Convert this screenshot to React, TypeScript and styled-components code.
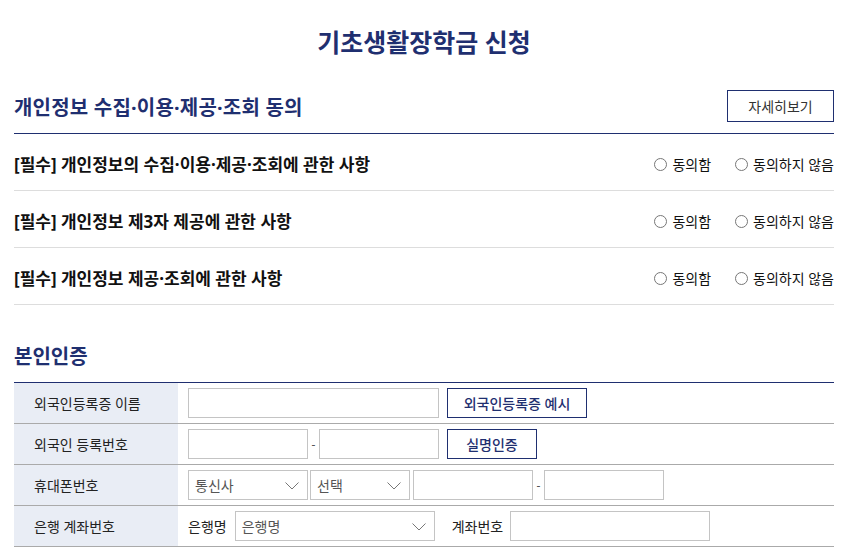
import React from 'react'
import styled, { createGlobalStyle } from 'styled-components'

const NAVY = '#1f2f70'

const agreements = [
    '[필수] 개인정보의 수집·이용·제공·조회에 관한 사항',
    '[필수] 개인정보 제3자 제공에 관한 사항',
    '[필수] 개인정보 제공·조회에 관한 사항',
]

export default function App() {
    return (
        <>
            <GlobalStyle />
            <Page>
                <Title>기초생활장학금 신청</Title>

                <SectionHead>
                    <SectionTitle>개인정보 수집·이용·제공·조회 동의</SectionTitle>
                    <DetailButton>자세히보기</DetailButton>
                </SectionHead>
                {agreements.map((text) => (
                    <AgreeRow key={text}>
                        <AgreeText>{text}</AgreeText>
                        <RadioGroup>
                            <RadioLabel><RadioCircle />동의함</RadioLabel>
                            <RadioLabel><RadioCircle />동의하지 않음</RadioLabel>
                        </RadioGroup>
                    </AgreeRow>
                ))}

                <AuthTitle>본인인증</AuthTitle>
                <Table>
                    <FormRow>
                        <LabelCell>외국인등록증 이름</LabelCell>
                        <FieldCell>
                            <TextInput $width={251} />
                            <OutlineButton $width={140} $gap={8}>외국인등록증 예시</OutlineButton>
                        </FieldCell>
                    </FormRow>
                    <FormRow>
                        <LabelCell>외국인 등록번호</LabelCell>
                        <FieldCell>
                            <TextInput $width={120} />
                            <Dash>-</Dash>
                            <TextInput $width={120} />
                            <OutlineButton $width={90} $gap={8}>실명인증</OutlineButton>
                        </FieldCell>
                    </FormRow>
                    <FormRow>
                        <LabelCell>휴대폰번호</LabelCell>
                        <FieldCell>
                            <SelectBox $width={120}>
                                <span>통신사</span>
                                <Chevron />
                            </SelectBox>
                            <SelectBox $width={100} $gap={2}>
                                <span>선택</span>
                                <Chevron />
                            </SelectBox>
                            <TextInput $width={120} $gap={3} />
                            <Dash>-</Dash>
                            <TextInput $width={120} />
                        </FieldCell>
                    </FormRow>
                    <FormRow>
                        <LabelCell>은행 계좌번호</LabelCell>
                        <FieldCell>
                            <InlineLabel>은행명</InlineLabel>
                            <SelectBox $width={200} $gap={8}>
                                <span>은행명</span>
                                <Chevron />
                            </SelectBox>
                            <InlineLabel $gap={17}>계좌번호</InlineLabel>
                            <TextInput $width={200} $gap={7} />
                        </FieldCell>
                    </FormRow>
                </Table>
            </Page>
        </>
    )
}

function Chevron() {
    return (
        <ChevronSvg width="14" height="8" viewBox="0 0 14 8">
            <path d="M0.5 0.5 L7 7 L13.5 0.5" fill="none" stroke="#777" strokeWidth="1" />
        </ChevronSvg>
    )
}

const GlobalStyle = createGlobalStyle`
    body {
        margin: 0;
        background: #ffffff;
        font-family: "Noto Sans", "Noto Sans CJK KR", sans-serif;
        color: #111;
    }
`

const Page = styled.div`
    width: 820px;
    padding: 0 16px 0 14px;
`

const Title = styled.h1`
    margin: 0;
    padding-top: 25px;
    font-size: 25px;
    line-height: 34px;
    font-weight: 700;
    color: ${NAVY};
    text-align: center;
`

const SectionHead = styled.div`
    display: flex;
    justify-content: space-between;
    align-items: center;
    margin-top: 31px;
    padding-bottom: 11px;
    border-bottom: 1px solid ${NAVY};
`

const SectionTitle = styled.h2`
    margin: 0;
    font-size: 20px;
    font-weight: 700;
    color: ${NAVY};
    letter-spacing: 0.2px;
`

const DetailButton = styled.button`
    width: 107px;
    height: 32px;
    border: 1px solid ${NAVY};
    background: #fff;
    font-family: inherit;
    font-size: 14px;
    color: #333;
    padding: 0;
`

const AgreeRow = styled.div`
    display: flex;
    justify-content: space-between;
    align-items: center;
    height: 56px;
    border-bottom: 1px solid #dddddd;
`

const AgreeText = styled.span`
    font-size: 17px;
    font-weight: 700;
    color: #111;
    padding-top: 3px;
`

const RadioGroup = styled.div`
    display: flex;
    gap: 24px;
    padding-top: 4px;
`

const RadioLabel = styled.label`
    display: flex;
    align-items: center;
    gap: 5px;
    font-size: 14px;
    color: #111;
`

const RadioCircle = styled.span`
    width: 13px;
    height: 13px;
    border: 1px solid #777;
    border-radius: 50%;
    box-sizing: border-box;
    display: inline-block;
`

const AuthTitle = styled.h2`
    margin: 38px 0 0;
    height: 39px;
    font-size: 20px;
    line-height: 28px;
    font-weight: 700;
    color: ${NAVY};
`

const Table = styled.div`
    border-top: 1px solid ${NAVY};
`

const FormRow = styled.div`
    display: grid;
    grid-template-columns: 164px 1fr;
    height: 40px;
    border-bottom: 1px solid #aaaaaa;
`

const LabelCell = styled.div`
    display: flex;
    align-items: center;
    padding-left: 20px;
    background: #e9edf5;
    font-size: 14px;
    color: #222;
`

const FieldCell = styled.div`
    display: flex;
    align-items: center;
    padding-left: 10px;
`

const TextInput = styled.input<{ $width: number; $gap?: number }>`
    width: ${(p) => p.$width}px;
    height: 30px;
    box-sizing: border-box;
    border: 1px solid #c4c4c4;
    margin: 0 0 0 ${(p) => p.$gap ?? 0}px;
    padding: 0 6px;
    font-family: inherit;
    font-size: 14px;
`

const Dash = styled.span`
    width: 11px;
    text-align: center;
    font-size: 12px;
    color: #555;
`

const OutlineButton = styled.button<{ $width: number; $gap?: number }>`
    width: ${(p) => p.$width}px;
    height: 30px;
    margin-left: ${(p) => p.$gap ?? 0}px;
    border: 1px solid ${NAVY};
    background: #fff;
    padding: 0;
    font-family: inherit;
    font-size: 14px;
    font-weight: 500;
    color: ${NAVY};
`

const SelectBox = styled.div<{ $width: number; $gap?: number }>`
    position: relative;
    width: ${(p) => p.$width}px;
    height: 30px;
    box-sizing: border-box;
    margin-left: ${(p) => p.$gap ?? 0}px;
    border: 1px solid #c4c4c4;
    display: flex;
    align-items: center;
    padding-left: 6px;
    font-size: 14px;
    color: #555;
`

const ChevronSvg = styled.svg`
    position: absolute;
    right: 8px;
    top: 11px;
`

const InlineLabel = styled.span<{ $gap?: number }>`
    margin-left: ${(p) => p.$gap ?? 0}px;
    font-size: 14px;
    color: #222;
`
